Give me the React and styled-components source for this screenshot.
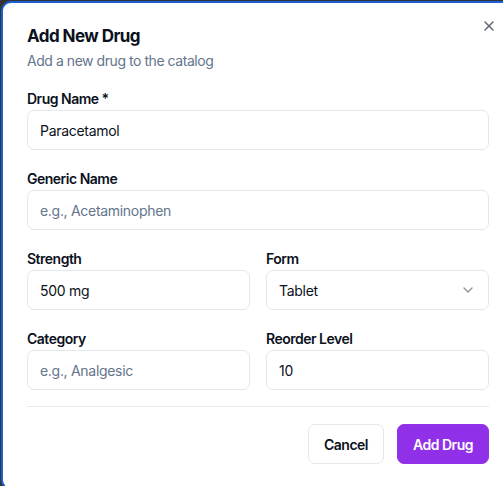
import React from 'react'
import styled, { createGlobalStyle } from 'styled-components'
import { X, ChevronDown } from 'lucide-react'

const GlobalStyle = createGlobalStyle`
  html, body {
    margin: 0;
    padding: 0;
    background: #333333;
    overflow: hidden;
  }
  body {
    font-family: Inter, "Noto Sans", sans-serif;
    -webkit-font-smoothing: antialiased;
  }
  * { box-sizing: border-box; }
`

const Screen = styled.div`
  width: 503px;
  height: 486px;
  overflow: hidden;
  padding: 1px 0 0 1px;
`

const Dialog = styled.div`
  position: relative;
  width: 514px;
  background: #ffffff;
  border: 2px solid #1b5fd9;
  border-radius: 10px;
  padding: 24px;
  display: flex;
  flex-direction: column;
`

const Close = styled.button`
  position: absolute;
  top: 15px;
  right: 16px;
  width: 16px;
  height: 16px;
  padding: 0;
  border: none;
  background: transparent;
  color: #5b6270;
  display: flex;
  align-items: center;
  justify-content: center;
  cursor: pointer;
`

const Header = styled.div`
  display: flex;
  flex-direction: column;
  gap: 6px;
`

const Title = styled.h2`
  margin: 0;
  font-size: 17px;
  line-height: 18px;
  font-weight: 700;
  letter-spacing: -0.55px;
  color: #0b1120;
`

const Description = styled.p`
  margin: 0;
  font-size: 14px;
  line-height: 20px;
  letter-spacing: -0.45px;
  color: #64748b;
`

const Form = styled.div`
  margin-top: 21px;
  display: flex;
  flex-direction: column;
  gap: 22px;
`

const Row = styled.div`
  display: grid;
  grid-template-columns: 1fr 1fr;
  gap: 16px;
`

const Field = styled.div`
  display: flex;
  flex-direction: column;
  gap: 4px;
`

const Label = styled.label`
  font-size: 14px;
  line-height: 14px;
  font-weight: 600;
  letter-spacing: -0.5px;
  color: #0b1120;
`

const InputBox = styled.div`
  height: 40px;
  border: 1px solid #e3e8ef;
  border-radius: 7px;
  background: #ffffff;
  padding: 0 12px;
  display: flex;
  align-items: center;
  justify-content: space-between;
  font-size: 14px;
  letter-spacing: -0.3px;
  color: ${p => (p.$placeholder ? '#64748b' : '#0b1120')};
`

const Chevron = styled(ChevronDown)`
  color: #0b1120;
  opacity: 0.45;
`

const Divider = styled.div`
  margin-top: 16px;
  height: 1px;
  background: #e8ebf0;
`

const Footer = styled.div`
  margin-top: 17px;
  display: flex;
  justify-content: flex-end;
  gap: 13px;
`

const Button = styled.button`
  height: 40px;
  padding: 0 15px;
  border-radius: 7px;
  font-family: inherit;
  font-size: 14px;
  font-weight: 600;
  letter-spacing: -0.5px;
  border: 1px solid ${p => (p.$primary ? '#9333ea' : '#e3e8ef')};
  background: ${p => (p.$primary ? '#9030e8' : '#ffffff')};
  color: ${p => (p.$primary ? '#ffffff' : '#0b1120')};
  cursor: pointer;
`

const TextField = ({ label, value, placeholder, select }) => (
  <Field>
    <Label>{label}</Label>
    <InputBox $placeholder={!value}>
      <span>{value || placeholder}</span>
      {select && <Chevron size={16} />}
    </InputBox>
  </Field>
)

const App = () => (
  <Screen>
    <GlobalStyle />
    <Dialog>
      <Close aria-label="Close">
        <X size={16} strokeWidth={2} />
      </Close>
      <Header>
        <Title>Add New Drug</Title>
        <Description>Add a new drug to the catalog</Description>
      </Header>
      <Form>
        <TextField label="Drug Name *" value="Paracetamol" />
        <TextField label="Generic Name" placeholder="e.g., Acetaminophen" />
        <Row>
          <TextField label="Strength" value="500 mg" />
          <TextField label="Form" value="Tablet" select />
        </Row>
        <Row>
          <TextField label="Category" placeholder="e.g., Analgesic" />
          <TextField label="Reorder Level" value="10" />
        </Row>
      </Form>
      <Divider />
      <Footer>
        <Button>Cancel</Button>
        <Button $primary>Add Drug</Button>
      </Footer>
    </Dialog>
  </Screen>
)

export default App
